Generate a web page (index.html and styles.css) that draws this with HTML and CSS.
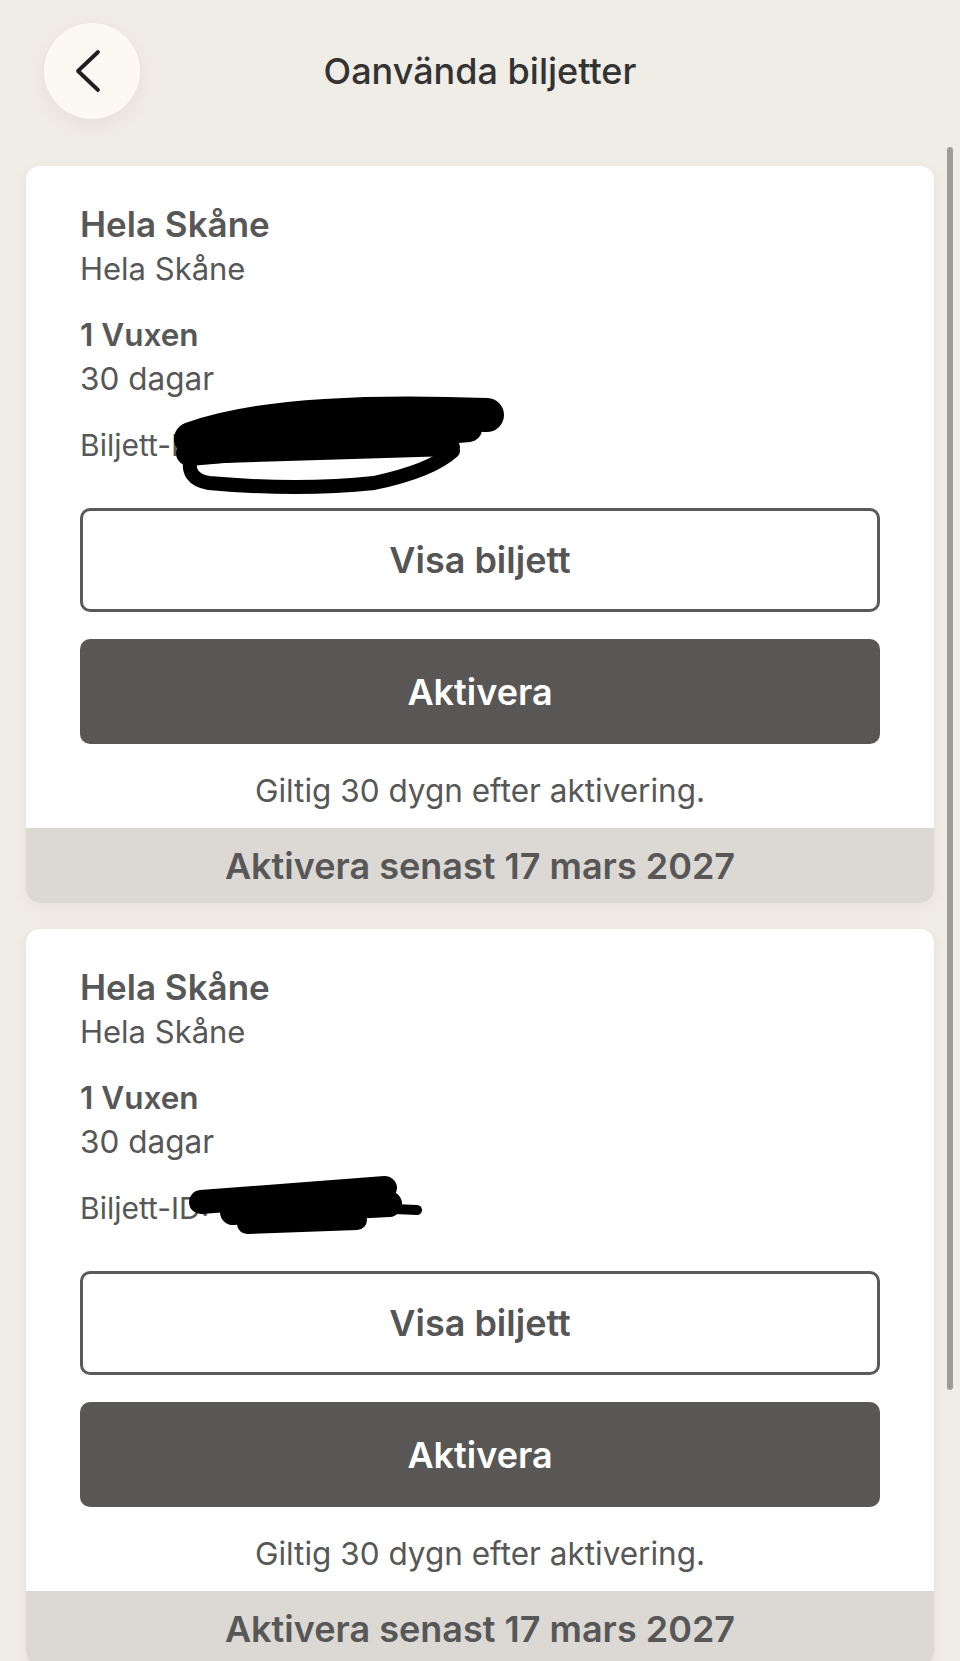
FILE: index.html
```html
<!DOCTYPE html>
<html lang="sv">
<head>
  <meta charset="UTF-8">
  <meta name="viewport" content="width=device-width, initial-scale=1">
  <title>Oanvända biljetter</title>
  <link rel="stylesheet" href="styles.css">
</head>
<body>
  <!-- Sidhuvud -->
  <header class="topbar">
    <button class="back-btn" aria-label="Tillbaka">
      <svg width="26" height="44" viewBox="0 0 26 44">
        <path d="M23 3 L3 22 L23 41" fill="none" stroke="#1f1f1f" stroke-width="3.8" stroke-linecap="round" stroke-linejoin="round"/>
      </svg>
    </button>
    <h1 class="page-title">Oanvända biljetter</h1>
  </header>

  <!-- Biljettlista -->
  <main class="ticket-list">
    <article class="ticket-card">
      <div class="ticket-body">
        <div class="ticket-group">
          <div class="ticket-zone">Hela Skåne</div>
          <div class="ticket-line">Hela Skåne</div>
        </div>
        <div class="ticket-group">
          <div class="ticket-type">1 Vuxen</div>
          <div class="ticket-line">30 dagar</div>
        </div>
        <div class="ticket-id">
          Biljett-ID:
          <svg class="redact redact-one" width="340" height="110" viewBox="0 0 340 110">
            <path d="M22 44 Q110 12 318 20" fill="none" stroke="#000" stroke-width="34" stroke-linecap="round"/>
            <path d="M20 58 L300 34" fill="none" stroke="#000" stroke-width="26" stroke-linecap="round"/>
            <path d="M20 60 L282 52" fill="none" stroke="#000" stroke-width="18" stroke-linecap="round"/>
            <path d="M22 62 Q16 84 40 88 Q130 96 205 88 Q262 76 284 56" fill="none" stroke="#000" stroke-width="14" stroke-linecap="round"/>
          </svg>
        </div>
        <button class="btn btn-outline">Visa biljett</button>
        <button class="btn btn-solid">Aktivera</button>
        <p class="validity">Giltig 30 dygn efter aktivering.</p>
      </div>
      <div class="ticket-footer">Aktivera senast 17 mars 2027</div>
    </article>

    <article class="ticket-card">
      <div class="ticket-body">
        <div class="ticket-group">
          <div class="ticket-zone">Hela Skåne</div>
          <div class="ticket-line">Hela Skåne</div>
        </div>
        <div class="ticket-group">
          <div class="ticket-type">1 Vuxen</div>
          <div class="ticket-line">30 dagar</div>
        </div>
        <div class="ticket-id">
          Biljett-ID:
          <svg class="redact redact-two" width="245" height="70" viewBox="0 0 245 70">
            <path d="M16 32 L200 18" fill="none" stroke="#000" stroke-width="24" stroke-linecap="round"/>
            <path d="M48 42 L204 34" fill="none" stroke="#000" stroke-width="26" stroke-linecap="round"/>
            <path d="M62 54 L172 50" fill="none" stroke="#000" stroke-width="20" stroke-linecap="round"/>
            <path d="M186 38 L232 40" fill="none" stroke="#000" stroke-width="10" stroke-linecap="round"/>
          </svg>
        </div>
        <button class="btn btn-outline">Visa biljett</button>
        <button class="btn btn-solid">Aktivera</button>
        <p class="validity">Giltig 30 dygn efter aktivering.</p>
      </div>
      <div class="ticket-footer">Aktivera senast 17 mars 2027</div>
    </article>
  </main>

  <!-- Rullningsindikator -->
  <div class="scroll-indicator"></div>
</body>
</html>
```

FILE: styles.css
```css
/* Grundstil */
html, body {
  margin: 0;
  padding: 0;
  background-color: #f0ece6;
  font-family: Inter, "Noto Sans", sans-serif;
  color: #575757;
}
body {
  position: relative;
  min-height: 1661px;
  overflow: hidden;
}
/* Sidhuvud med tillbakaknapp */
.topbar {
  display: grid;
  grid-template-columns: 1fr auto 1fr;
  align-items: center;
  padding: 23px 44px 0;
  margin-bottom: 47px;
}
.back-btn {
  justify-self: start;
  width: 96px;
  height: 96px;
  border: none;
  border-radius: 50%;
  background: #fcf9f3;
  box-shadow: 0 6px 18px rgba(120, 100, 70, 0.08);
  display: flex;
  align-items: center;
  justify-content: center;
  padding: 0 8px 0 0;
  cursor: pointer;
}
.page-title {
  margin: 0;
  font-size: 36px;
  font-weight: 500;
  color: #333;
}
/* Biljettkort */
.ticket-list {
  display: flex;
  flex-direction: column;
  gap: 26px;
  margin: 0 26px;
}
.ticket-card {
  background: #fff;
  border-radius: 14px;
  overflow: hidden;
  box-shadow: 0 4px 14px rgba(120, 100, 70, 0.07);
}
.ticket-body {
  padding: 36px 54px 17px;
}
.ticket-group {
  margin-bottom: 22px;
}
.ticket-zone {
  font-size: 35px;
  line-height: 45px;
  font-weight: 600;
}
.ticket-type {
  font-size: 31.5px;
  line-height: 44px;
  font-weight: 600;
}
.ticket-line {
  font-size: 31px;
  line-height: 44px;
}
.ticket-group + .ticket-group .ticket-line {
  font-size: 31.5px;
}
.ticket-id {
  position: relative;
  font-size: 30px;
  line-height: 44px;
}
/* Överstrukna biljettnummer */
.redact {
  position: absolute;
}
.redact-one {
  left: 89px;
  top: -28px;
}
.redact-two {
  left: 105px;
  top: -16px;
}
/* Knappar */
.btn {
  display: block;
  width: 100%;
  box-sizing: border-box;
  font-family: inherit;
  font-size: 36px;
  font-weight: 600;
  border-radius: 10px;
  cursor: pointer;
}
.btn-outline {
  margin-top: 41px;
  height: 104px;
  border: 3px solid #5a5a5a;
  background: #fff;
  color: #555;
}
.btn-solid {
  margin-top: 27px;
  height: 105px;
  border: none;
  background: #585756;
  color: #fff;
}
.validity {
  margin: 27px 0 0;
  font-size: 31.5px;
  line-height: 40px;
  text-align: center;
}
.ticket-footer {
  height: 75px;
  display: flex;
  align-items: center;
  justify-content: center;
  background: #dcd8d4;
  font-size: 36px;
  font-weight: 600;
}
/* Rullningslist */
.scroll-indicator {
  position: absolute;
  top: 147px;
  right: 7px;
  width: 6px;
  height: 1243px;
  border-radius: 3px;
  background: #9d9c99;
}
```
